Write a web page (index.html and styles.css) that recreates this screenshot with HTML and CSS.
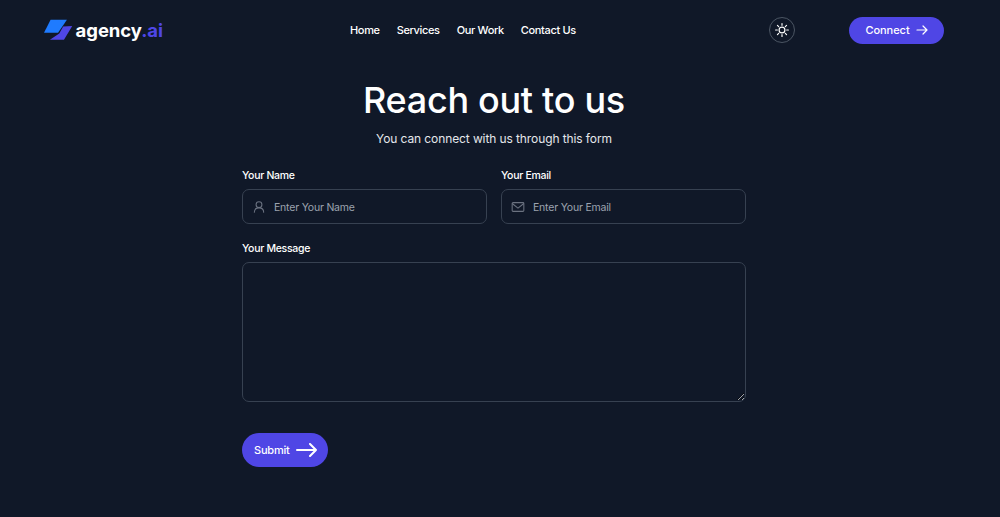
FILE: index.html
```html
<!DOCTYPE html>
<html lang="en">
<head>
    <meta charset="UTF-8">
    <meta name="viewport" content="width=device-width, initial-scale=1.0">
    <title>Contact - agency.ai</title>
    <link rel="stylesheet" href="styles.css">
</head>
<body>

    <header class="site-header">
        <a class="logo" href="#">
            <svg class="logo-mark" width="29" height="22" viewBox="0 0 29 22">
                <polygon points="6.700,0.700 23.300,0.700 14.300,13.700 0,13.700" fill="#1f7bff"/>
                <polygon points="19.500,7.500 28.700,7 20.300,21 6,21 15.500,14.500" fill="#4f46e5"/>
            </svg>
            <span class="logo-text">agency<span class="logo-accent">.ai</span></span>
        </a>
        <nav class="main-nav">
            <a href="#">Home</a>
            <a href="#">Services</a>
            <a href="#">Our Work</a>
            <a href="#">Contact Us</a>
        </nav>
        <div class="header-actions">
            <button class="theme-btn" type="button" aria-label="Toggle theme">
                <svg width="14" height="14" viewBox="0 0 24 24" fill="none" stroke="#fff" stroke-width="2" stroke-linecap="round">
                    <circle cx="12" cy="12" r="5"/>
                    <path d="M12 1v3M12 20v3M1 12h3M20 12h3M4.200 4.200l2.100 2.100M17.700 17.700l2.100 2.100M4.200 19.800l2.100-2.100M17.700 6.300l2.100-2.100"/>
                </svg>
            </button>
            <a class="connect-btn" href="#">
                Connect
                <svg width="12" height="10" viewBox="0 0 12 10" fill="none" stroke="#fff" stroke-width="1.200" stroke-linecap="round" stroke-linejoin="round">
                    <path d="M1 5h10M7 1l4 4-4 4"/>
                </svg>
            </a>
        </div>
    </header>

    <main class="contact">
        <h1>Reach out to us</h1>
        <p class="subtitle">You can connect with us through this form</p>

        <form class="contact-form">
            <div class="form-row">
                <div class="field">
                    <label for="name">Your Name</label>
                    <div class="input-wrap">
                        <svg width="14" height="14" viewBox="0 0 24 24" fill="none" stroke="#6b7280" stroke-width="1.800" stroke-linecap="round">
                            <circle cx="12" cy="8" r="5"/>
                            <path d="M4 21c0-4.500 3.500-7.500 8-7.500s8 3 8 7.500"/>
                        </svg>
                        <input id="name" type="text" placeholder="Enter Your Name">
                    </div>
                </div>
                <div class="field">
                    <label for="email">Your Email</label>
                    <div class="input-wrap">
                        <svg width="14" height="14" viewBox="0 0 24 24" fill="none" stroke="#6b7280" stroke-width="1.800" stroke-linejoin="round">
                            <rect x="2" y="4.500" width="20" height="15" rx="1.500"/>
                            <path d="M2 6l10 8 10-8"/>
                        </svg>
                        <input id="email" type="email" placeholder="Enter Your Email">
                    </div>
                </div>
            </div>
            <div class="field">
                <label for="message">Your Message</label>
                <textarea id="message"></textarea>
            </div>
            <button class="submit-btn" type="submit">
                Submit
                <svg width="21" height="14" viewBox="0 0 21 14" fill="none" stroke="#fff" stroke-width="2" stroke-linecap="round" stroke-linejoin="round">
                    <path d="M1 7h19M14 1l6 6-6 6"/>
                </svg>
            </button>
        </form>
    </main>

</body>
</html>
```

FILE: styles.css
```css
* {
    box-sizing: border-box;
}
body {
    margin: 0;
    height: 517px;
    overflow: hidden;
    background-color: #101828;
    color: #fff;
    font-family: Inter, "Liberation Sans", sans-serif;
}
a {
    color: #fff;
    text-decoration: none;
}
.site-header {
    display: flex;
    align-items: center;
    height: 60px;
    padding-left: 44px;
}
.logo {
    display: flex;
    align-items: center;
    gap: 3px;
    width: 119px;
    margin-right: 187px;
}
.logo-text {
    font-size: 18.500px;
    font-weight: 700;
    letter-spacing: -0.05px;
}
.logo-accent {
    color: #4f46e5;
}
.main-nav {
    display: flex;
    gap: 17px;
    width: 227px;
    margin-right: 192px;
    font-size: 11px;
    font-weight: 500;
    letter-spacing: -0.35px;
    white-space: nowrap;
}
.header-actions {
    display: flex;
    align-items: center;
    gap: 54px;
}
.theme-btn {
    display: flex;
    align-items: center;
    justify-content: center;
    width: 26px;
    height: 26px;
    padding: 0;
    background: none;
    border: 1px solid #4b5563;
    border-radius: 50%;
}
.connect-btn {
    display: flex;
    align-items: center;
    justify-content: center;
    gap: 6px;
    width: 95px;
    height: 27px;
    font-size: 11px;
    font-weight: 500;
    letter-spacing: -0.05px;
    background-color: #4f46e5;
    border-radius: 14px;
}
.contact {
    width: 504px;
    margin-left: 242px;
}
h1 {
    margin: 20px 0 0;
    font-size: 36px;
    font-weight: 500;
    line-height: 40px;
    letter-spacing: -0.3px;
    text-align: center;
}
.subtitle {
    margin: 10px 0 0;
    font-size: 12px;
    line-height: 17px;
    letter-spacing: -0.1px;
    text-align: center;
    color: #e5e7eb;
}
.contact-form {
    display: flex;
    flex-direction: column;
    gap: 17px;
    margin-top: 21px;
}
.form-row {
    display: grid;
    grid-template-columns: 245px 245px;
    gap: 14px;
}
.field label {
    display: block;
    margin-bottom: 5px;
    font-size: 10.500px;
    font-weight: 500;
    line-height: 16px;
    letter-spacing: -0.3px;
}
.input-wrap {
    display: flex;
    align-items: center;
    gap: 8px;
    height: 35px;
    padding-left: 9px;
    border: 1px solid #374151;
    border-radius: 7px;
}
.input-wrap input {
    flex: 1;
    min-width: 0;
    padding: 2px 0 0;
    font: inherit;
    font-size: 10.500px;
    letter-spacing: -0.2px;
    color: #fff;
    background: none;
    border: none;
    outline: none;
}
.input-wrap input::placeholder {
    color: #9ca3af;
}
textarea {
    display: block;
    width: 100%;
    height: 140px;
    background: none;
    border: 1px solid #374151;
    border-radius: 7px;
    outline: none;
    color: #fff;
}
.submit-btn {
    display: flex;
    align-items: center;
    gap: 6px;
    width: 86px;
    height: 34px;
    margin-top: 14px;
    padding: 0 0 0 12px;
    font: inherit;
    font-size: 11px;
    font-weight: 500;
    letter-spacing: -0.2px;
    color: #fff;
    background-color: #4f46e5;
    border: none;
    border-radius: 17px;
}
```
